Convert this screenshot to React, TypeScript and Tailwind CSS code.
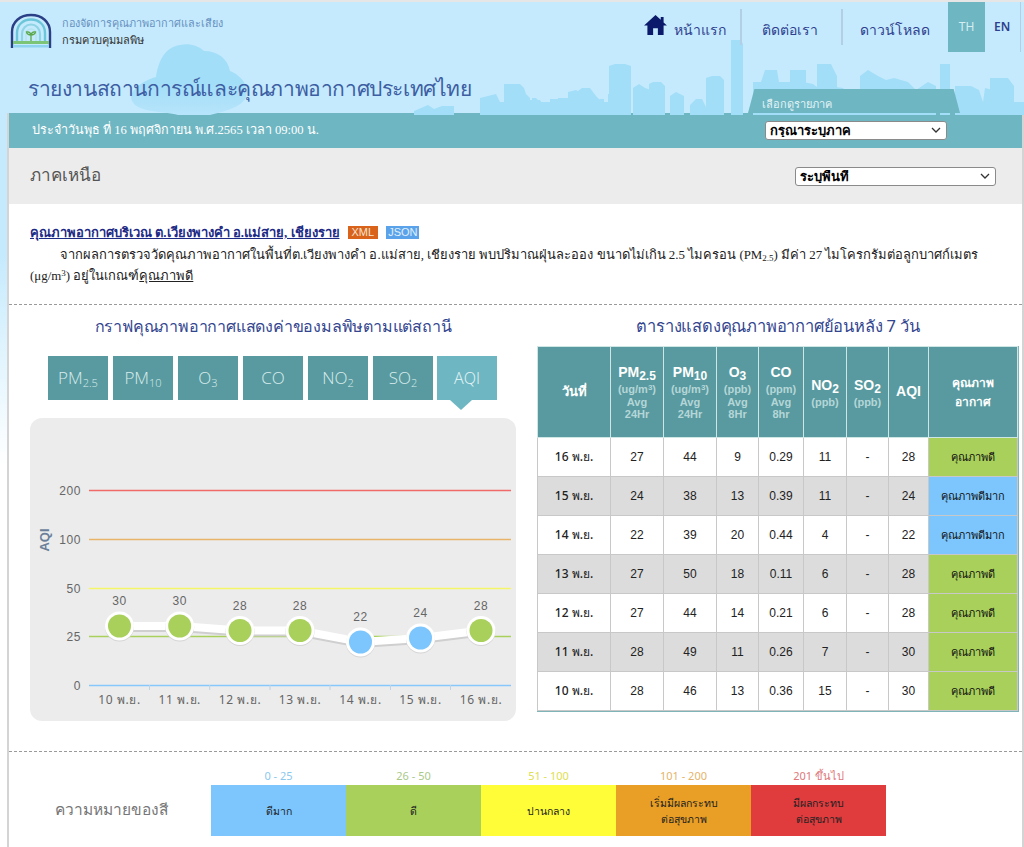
const thai = "font-['Noto_Sans','Liberation_Sans',sans-serif]";

const tabs = [
  { label: "PM", sub: "2.5" },
  { label: "PM", sub: "10" },
  { label: "O", sub: "3" },
  { label: "CO", sub: "" },
  { label: "NO", sub: "2" },
  { label: "SO", sub: "2" },
];

const rows = [
  { day: "16 พ.ย.", v: ["27", "44", "9", "0.29", "11", "-", "28"], good: true },
  { day: "15 พ.ย.", v: ["24", "38", "13", "0.39", "11", "-", "24"], good: false },
  { day: "14 พ.ย.", v: ["22", "39", "20", "0.44", "4", "-", "22"], good: false },
  { day: "13 พ.ย.", v: ["27", "50", "18", "0.11", "6", "-", "28"], good: true },
  { day: "12 พ.ย.", v: ["27", "44", "14", "0.21", "6", "-", "28"], good: true },
  { day: "11 พ.ย.", v: ["28", "49", "11", "0.26", "7", "-", "30"], good: true },
  { day: "10 พ.ย.", v: ["28", "46", "13", "0.36", "15", "-", "30"], good: true },
];

const legend = [
  { range: "0 - 25", text: ["ดีมาก"], bg: "bg-[#7cc6fd]", color: "text-[#8cc8ee]" },
  { range: "26 - 50", text: ["ดี"], bg: "bg-[#a8d05a]", color: "text-[#a9c98a]" },
  { range: "51 - 100", text: ["ปานกลาง"], bg: "bg-[#fffd38]", color: "text-[#dede50]" },
  { range: "101 - 200", text: ["เริ่มมีผลกระทบ", "ต่อสุขภาพ"], bg: "bg-[#e99f25]", color: "text-[#e5b46a]" },
  { range: "201 ขึ้นไป", text: ["มีผลกระทบ", "ต่อสุขภาพ"], bg: "bg-[#e03c3e]", color: "text-[#e0777a]" },
];

const points = [
  { x: 89.5, y: 208, v: 30, good: true },
  { x: 149.7, y: 208, v: 30, good: true },
  { x: 210, y: 212.5, v: 28, good: true },
  { x: 270, y: 212.5, v: 28, good: true },
  { x: 330.5, y: 224, v: 22, good: false },
  { x: 390.5, y: 220, v: 24, good: false },
  { x: 451, y: 212.5, v: 28, good: true },
];

const levels = [
  { y: 72.5, label: "200", color: "#f06a6a" },
  { y: 121.5, label: "100", color: "#e8b46a" },
  { y: 170.5, label: "50", color: "#f5f56a" },
  { y: 218.5, label: "25", color: "#a8d05a" },
  { y: 267.5, label: "0", color: "#86c8fb" },
];

const Logo = () => (
  <svg width="42" height="36" viewBox="0 0 42 36" fill="none">
    <path d="M2 35V19C2 9 10 2 21 2s19 7 19 17v16" stroke="#2b3f86" strokeWidth="2.4" />
    <path d="M7 29V20C7 12 13 6.500 21 6.500S35 12 35 20v9" stroke="#6cc5d8" strokeWidth="2.4" />
    <path d="M12 29v-8c0-5.500 4-9.500 9-9.500s9 4 9 9.500v8" stroke="#8ed4e4" strokeWidth="2.2" />
    <path d="M16 29v-8c0-3 2.200-5 5-5s5 2 5 5v8" stroke="#b4e4ee" strokeWidth="1.600" />
    <path d="M21 28v-6M21 22c-3 0-4-1-4.500-3 2.500-.5 4 .5 4.500 3zM21 22c3 0 4-1 4.500-3-2.500-.5-4 .5-4.500 3z" stroke="#5aa84a" strokeWidth="1.300" />
    <rect x="3" y="28" width="36" height="3" fill="#7cc576" />
    <rect x="3" y="32" width="36" height="2.500" fill="#8ed4f0" />
  </svg>
);

const Skyline = () => (
  <svg className="absolute left-0 top-0" width="1024" height="113" viewBox="0 0 1024 113" fill="#a3def8">
    <defs>
      <linearGradient id="tree" x1="0" y1="0" x2="0" y2="1">
        <stop offset="0.55" stopColor="#a3def8" />
        <stop offset="1" stopColor="#b6e4fb" />
      </linearGradient>
    </defs>
    <path fill="url(#tree)" d="M178 113c-14-4-40-2-46-14-4-10 10-20 24-24 2-14 8-30 24-32 8-2 18 0 24 6 14 0 24 8 26 20 10 4 20 14 16 26-4 10-20 14-36 18z" />
    <path d="M414 113v-4l14-6 6 4 8-3h12v9z" />
    <path d="M480 113V96l16-4 4 8h4V82h8l4 10h8l4 6h12l4 6h14v-8h10v10h6V92l8-6h8l6 8 6 6h6v-8h10v21z" />
    <path d="M512 113V82h8l4 4 2 6 4 4v17zM532 113V96h4l4 4h20v13zM550 113v-16h12v16zM568 113V90l8-2 6 4 4 8h6v13zM588 113v-8l12-8h4v16z" />
    <path d="M609 113V64l6-2h10l6 2v49zM633 113V86l6-4 6 4 6 2v25zM649 113V82l4-2h8l4 4v29zM670 113V94l6-4 8 4v19zM690 113v-10l6-6h6l4 8 6 8zM706 113V76l6-2h8l4 4v35z" />
    <path d="M731 113V38h10l2 4v71zM753 113V80h8l4-12h12l2 12h12l4 8 8-8 10 2 8 6 8-4 14 2 8 8h8v-6h10v25z" />
    <path d="M790 68h16v45h-16zM817 62h14l6 12v39h-20zM940 62h10v51h-10zM955 84h16l8 4 4 12 2-14 8 2v35h-38zM990 76h18l6 8v29h-24zM1012 100h12v13h-12z" />
    <path d="M860 113V74l8-6 10 6 8 4 8-2 14 4 8 8 12-8 8 4v29z" />
  </svg>
);

const Select = ({ label, w }: { label: string; w: string }) => (
  <div className={`relative h-[19px] ${w}`}>
    <select className={`block h-full w-full appearance-none rounded-[3px] border border-[#8a8a8a] bg-white pl-[4px] text-[13px] font-semibold leading-none text-black ${thai}`}>
      <option>{label}</option>
    </select>
    <svg className="absolute right-[6px] top-[6px]" width="10" height="7" viewBox="0 0 10 7" fill="none">
      <path d="M1 1l4 4 4-4" stroke="#333" strokeWidth="1.300" />
    </svg>
  </div>
);

const Chart = () => (
  <svg width="486" height="303" viewBox="0 0 486 303" className="block">
    <text transform="translate(19 122) rotate(-90)" textAnchor="middle" fontSize="13" fontWeight="700" fill="#6b7f99" fontFamily="Liberation Sans">AQI</text>
    {levels.map((l) => (
      <g key={l.label}>
        <line x1="59" x2="481" y1={l.y} y2={l.y} stroke={l.color} strokeWidth="1.4" />
        <text x="51" y={l.y + 4} textAnchor="end" fontSize="12" letterSpacing="0.6" fill="#666" fontFamily="Liberation Sans">{l.label}</text>
      </g>
    ))}
    {[119.5, 179.7, 240, 300, 360.5, 420.5].map((x) => (
      <line key={x} x1={x} x2={x} y1="267" y2="272" stroke="#bcd4e6" />
    ))}
    <polyline points={points.map((p) => `${p.x},${p.y + 1.5}`).join(" ")} fill="none" stroke="#cfcfcf" strokeWidth="9" />
    <polyline points={points.map((p) => `${p.x},${p.y}`).join(" ")} fill="none" stroke="#fff" strokeWidth="8" />
    {points.map((p, i) => (
      <g key={i}>
        <circle cx={p.x} cy={p.y + 1} r="14.500" fill="#d4d4d4" />
        <circle cx={p.x} cy={p.y} r="14.500" fill="#fff" />
        <circle cx={p.x} cy={p.y} r="11.500" fill={p.good ? "#a8d05a" : "#7cc6fd"} />
        <text x={p.x} y={p.y - 21} textAnchor="middle" fontSize="12" letterSpacing="0.6" fill="#666" fontFamily="Liberation Sans">{p.v}</text>
      </g>
    ))}
    {["10", "11", "12", "13", "14", "15", "16"].map((d, i) => (
      <text key={d} x={points[i].x} y="286" textAnchor="middle" fontSize="12" letterSpacing="0.6" fill="#666" fontFamily="Noto Sans, Liberation Sans, sans-serif">{d} พ.ย.</text>
    ))}
  </svg>
);

const Th = ({ main, sub, lines, w }: { main: string; sub?: string; lines?: string[]; w: string }) => (
  <th className={`${w} border border-[#cfe6e6] bg-[#589a9f] p-0 text-center align-middle font-['Liberation_Sans',sans-serif] text-white`}>
    <div className="h-[20px] whitespace-nowrap text-[14px] font-bold leading-[18px]">
      {main}
      {sub && <span className="relative top-[3px] text-[12px] leading-none">{sub}</span>}
    </div>
    {lines?.map((l, i) => (
      <div key={i} className="whitespace-nowrap text-[11px] font-bold leading-[12.500px] text-[#b5d6d8]">
        {l === "(ug/m3)" ? <>(ug/m<span className="relative top-[-3px] text-[8px] leading-none">3</span>)</> : l}
      </div>
    ))}
  </th>
);

export default function App() {
  return (
    <div className="h-[847px] w-[1024px] overflow-hidden bg-gradient-to-b from-[#c5eafd] from-[30%] to-white to-[55%]">
      {/* Header */}
      <header className="relative h-[113px] border-t-2 border-[#e6e6e6] bg-[#c5eafd]">
        <Skyline />
        <div className="relative flex justify-between">
          <div className="ml-[10px] mt-[7px] flex items-center gap-[10px]">
            <Logo />
            <div className={`${thai} leading-[17px]`}>
              <div className="text-[10.800px] text-[#6590c0]">กองจัดการคุณภาพอากาศและเสียง</div>
              <div className="text-[11px] font-medium text-[#333]">กรมควบคุมมลพิษ</div>
            </div>
          </div>
          <nav className={`flex h-[50px] items-center ${thai} text-[14px] text-[#2f3f8f]`}>
            <svg width="23" height="20" viewBox="0 0 24 21" fill="#0b1a6b" className="mb-[4px]">
              <path d="M12 0L0 11h3.500v10h6v-7h5v7h6V11H24l-3.500-3.200V2h-3v3z" />
            </svg>
            <span className="ml-[7px] w-[66px] pt-[5px]">หน้าแรก</span>
            <span className="h-[36px] w-[2px] bg-[#b3cfe6]" />
            <span className="ml-[20px] w-[79px] pt-[5px]">ติดต่อเรา</span>
            <span className="h-[36px] w-[2px] bg-[#b3cfe6]" />
            <span className="ml-[17px] w-[88px] pt-[5px]">ดาวน์โหลด</span>
            <span className="flex h-[50px] w-[37px] items-center justify-center bg-[#6eb6c2] text-[12px] text-[#d5eef2]">TH</span>
            <span className="ml-[9px] w-[26px] text-[12px] font-semibold">EN</span>
            <span className="h-[50px] w-[4px] border-l border-[#b3cfe6]" />
          </nav>
        </div>
        <h1 className={`relative ml-[28px] mt-[18px] text-[21px] leading-[36px] tracking-[-0.4px] text-[#3d5ea3] ${thai}`}>
          รายงานสถานการณ์และคุณภาพอากาศประเทศไทย
        </h1>
        <div className={`absolute bottom-0 left-[748px] h-[24px] w-[212px] rounded-t-[4px] bg-[#6eb6c2] pl-[14px] pt-[7px] text-[11px] leading-[15px] text-[#e3f4f7] [clip-path:polygon(3%_0,97%_0,100%_100%,0_100%)] ${thai}`}>
          เลือกดูรายภาค
        </div>
      </header>

      <main className="ml-[7px] border-x-2 border-[#d4d4d4] bg-white">
        <div className="flex h-[35px] items-start justify-between bg-[#6eb6c2] pl-[23px] pr-[75px] pt-[8px]">
          <p className="font-['Liberation_Serif','Noto_Sans',serif] text-[12.600px] font-medium leading-[19px] text-white">
            ประจำวันพุธ ที่ 16 พฤศจิกายน พ.ศ.2565 เวลา 09:00 น.
          </p>
          <Select label="กรุณาระบุภาค" w="w-[182px]" />
        </div>
        <div className="flex h-[56px] items-start justify-between bg-[#ececec] pl-[21px] pr-[26px] pt-[14px]">
          <h2 className={`text-[17px] leading-[25px] text-[#555] ${thai}`}>ภาคเหนือ</h2>
          <div className="mt-[5px]">
            <Select label="ระบุพื้นที่" w="w-[201px]" />
          </div>
        </div>

        {/* Detail */}
        <section className="h-[101px] border-b border-dashed border-[#9a9a9a] px-[21px] pt-[18px] font-['Liberation_Serif','Noto_Sans',serif] text-[12.920px] font-medium leading-[21px] text-[#222]">
          <div className="flex items-center">
            <a className="text-[13px] font-bold text-[#1c2a86] underline">คุณภาพอากาศบริเวณ ต.เวียงพางคำ อ.แม่สาย, เชียงราย</a>
            <span className="ml-[8px] h-[13px] bg-[#d9631a] px-[4px] font-['Liberation_Sans',sans-serif] text-[11px] font-normal leading-[13px] text-[#f7e3d3]">XML</span>
            <span className="ml-[8px] h-[13px] bg-[#5aa3ea] px-[2px] font-['Liberation_Sans',sans-serif] text-[11px] font-normal leading-[13px] text-[#e2f0fb]">JSON</span>
          </div>
          <p className="mt-[1px] indent-[30px]">
            จากผลการตรวจวัดคุณภาพอากาศในพื้นที่ต.เวียงพางคำ อ.แม่สาย, เชียงราย พบปริมาณฝุ่นละออง ขนาดไม่เกิน 2.5 ไมครอน (PM<sub className="text-[9px] leading-none">2.5</sub>) มีค่า 27 ไมโครกรัมต่อลูกบาศก์เมตร (μg/m<sup className="text-[9px] leading-none">3</sup>) อยู่ในเกณฑ์<span className="underline">คุณภาพดี</span>
          </p>
        </section>

        <div className="flex h-[447px] border-b border-dashed border-[#9a9a9a]">
          {/* Chart column */}
          <section className="ml-[21px] w-[486px]">
            <h3 className={`mt-[9px] text-center text-[16px] leading-[24px] tracking-[-0.2px] text-[#34468f] ${thai}`}>
              กราฟคุณภาพอากาศแสดงค่าของมลพิษตามแต่สถานี
            </h3>
            <div className="ml-[18px] mt-[18px] flex gap-[5px]">
              {tabs.map((t) => (
                <div key={t.label + t.sub} className="flex h-[44px] w-[60px] items-center justify-center bg-[#589a9f] font-['Open_Sans',sans-serif] text-[17px] font-light text-[#d8ecee]">
                  {t.label}
                  {t.sub && <span className="mt-[9px] self-center text-[11px] leading-none">{t.sub}</span>}
                </div>
              ))}
              <div className="relative -ml-[1px] flex h-[44px] w-[60px] items-center justify-center bg-[#6eb6c2] font-['Open_Sans',sans-serif] text-[16px] font-light text-[#e8f6f8]">
                AQI
                <span className="absolute left-[13px] top-[44px] h-0 w-0 border-x-[11px] border-t-[10px] border-x-transparent border-t-[#6eb6c2]" />
              </div>
            </div>
            <div className="mt-[18px] rounded-[12px] bg-[#ececec]">
              <Chart />
            </div>
          </section>

          {/* Table column */}
          <section className="ml-[21px] w-[482px]">
            <h3 className={`mt-[9px] text-center text-[16.500px] leading-[24px] tracking-[-0.2px] text-[#34468f] ${thai}`}>
              ตารางแสดงคุณภาพอากาศย้อนหลัง 7 วัน
            </h3>
            <div className="mt-[8px] w-fit border-b border-r border-[#7fb5b8]">
              <table className="w-[481px] table-fixed border-collapse font-['Liberation_Sans',sans-serif]">
                <thead>
                  <tr className="h-[91px]">
                    <th className={`w-[73px] border border-[#cfe6e6] bg-[#589a9f] text-[13px] font-bold text-white ${thai}`}>วันที่</th>
                    <Th w="w-[53px]" main="PM" sub="2.5" lines={["(ug/m3)", "Avg", "24Hr"]} />
                    <Th w="w-[53px]" main="PM" sub="10" lines={["(ug/m3)", "Avg", "24Hr"]} />
                    <Th w="w-[42px]" main="O" sub="3" lines={["(ppb)", "Avg", "8Hr"]} />
                    <Th w="w-[45px]" main="CO" lines={["(ppm)", "Avg", "8hr"]} />
                    <Th w="w-[43px]" main="NO" sub="2" lines={["(ppb)"]} />
                    <Th w="w-[42px]" main="SO" sub="2" lines={["(ppb)"]} />
                    <Th w="w-[40px]" main="AQI" />
                    <th className={`border border-[#cfe6e6] bg-[#589a9f] text-[12px] font-bold leading-[19px] text-white ${thai}`}>
                      คุณภาพ<br />อากาศ
                    </th>
                  </tr>
                </thead>
                <tbody>
                  {rows.map((r, i) => (
                    <tr key={r.day} className={`h-[39px] text-center text-[12px] text-[#222] ${i % 2 ? "bg-[#dcdcdc]" : "bg-white"}`}>
                      <td className={`border border-[#c8c8c8] font-medium ${thai}`}>{r.day}</td>
                      {r.v.map((v, j) => (
                        <td key={j} className="border border-[#c8c8c8]">{v}</td>
                      ))}
                      <td className={`border border-[#c8c8c8] text-[11px] font-medium text-[#111] ${r.good ? "bg-[#a8d05a]" : "bg-[#7cc6fd]"} ${thai}`}>
                        {r.good ? "คุณภาพดี" : "คุณภาพดีมาก"}
                      </td>
                    </tr>
                  ))}
                </tbody>
              </table>
            </div>
          </section>
        </div>

        {/* Legend */}
        <section className={`flex h-[95px] items-start ${thai}`}>
          <div className="mt-[46px] w-[202px] pl-[46px] text-[15.500px] text-[#777]">ความหมายของสี</div>
          <div className="flex pt-[15px]">
            {legend.map((l) => (
              <div key={l.range} className="w-[135px] text-center">
                <div className={`h-[18px] text-[11px] leading-[18px] ${l.color}`}>{l.range}</div>
                <div className={`flex h-[51px] flex-col items-center justify-center text-[10.500px] leading-[16px] text-[#222] ${l.bg}`}>
                  {l.text.map((t) => (
                    <span key={t}>{t}</span>
                  ))}
                </div>
              </div>
            ))}
          </div>
        </section>
      </main>
    </div>
  );
}
